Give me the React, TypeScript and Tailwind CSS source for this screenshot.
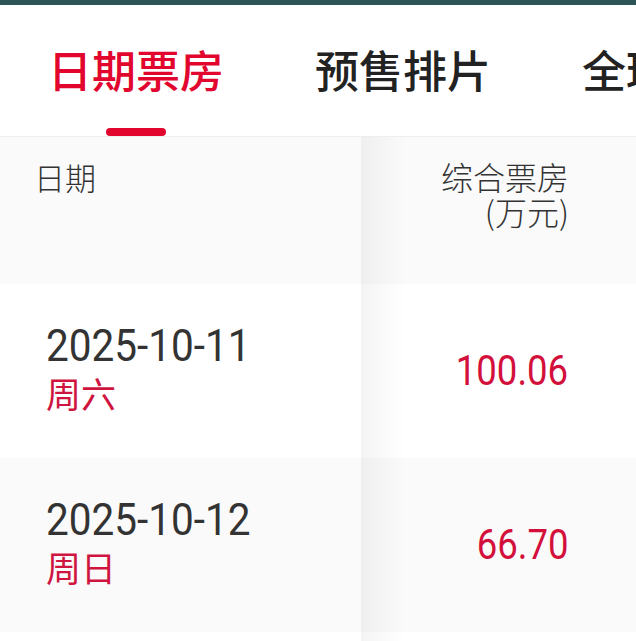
import React from 'react';

interface DayRow {
  date: string;
  week: string;
  total: string;
}

const tabs = ['日期票房', '预售排片', '全球票房', '地区票房'];

const rows: DayRow[] = [
  { date: '2025-10-11', week: '周六', total: '100.06' },
  { date: '2025-10-12', week: '周日', total: '66.70' },
  { date: '2025-10-13', week: '周一', total: '21.38' },
];

const cjk = "font-['Noto_Sans_CJK_SC',sans-serif]";
const num = "font-['Roboto','Noto_Sans_CJK_SC',sans-serif]";

const App: React.FC = () => {
  const active = 0;

  return (
    <div className={`w-[636px] h-[641px] overflow-hidden bg-white ${cjk}`}>
      <div className="h-[5px] bg-[#2d5558]" />

      {/* tabs */}
      <div className="flex gap-[91px] pl-[48px] pt-[42px] border-b border-[#eeeeee] whitespace-nowrap">
        {tabs.map((tab, i) => (
          <div key={tab} className="flex flex-col items-center shrink-0">
            <span
              className={`text-[44px] leading-[44px] font-medium ${
                i === active ? 'text-[#e2062f]' : 'text-[#222222]'
              }`}
            >
              {tab}
            </span>
            <span
              className={`mt-[37px] h-[8px] w-[60px] rounded-full ${
                i === active ? 'bg-[#e2062f]' : 'bg-transparent'
              }`}
            />
          </div>
        ))}
      </div>

      {/* table */}
      <div className="relative">
        <div className="flex h-[147px] bg-[#fafafa]">
          <div className="w-[361px] shrink-0 pl-[34px] pt-[22px] text-[31px] leading-[35px] font-light text-[#333333]">
            日期
          </div>
          <div className="w-[240px] shrink-0 pr-[32px] pt-[22px] text-right text-[32px] leading-[35px] font-light text-[#333333]">
            综合票房
            <br />
            (万元)
          </div>
        </div>

        {rows.map((row, i) => (
          <div key={row.date} className={`flex h-[174px] ${i % 2 === 0 ? 'bg-white' : 'bg-[#fafafa]'}`}>
            <div className="w-[361px] shrink-0 pl-[46px] pt-[38px]">
              <div className={`${num} text-[45px] leading-[48px] text-[#333333] origin-left scale-x-[0.9] whitespace-nowrap`}>
                {row.date}
              </div>
              <div className="mt-[3px] text-[35px] leading-[40px] text-[#cf1440]">{row.week}</div>
            </div>
            <div className="w-[240px] shrink-0 pr-[33px] flex items-center justify-end">
              <span className={`${num} text-[42px] leading-[48px] text-[#d3103b] origin-right scale-x-[0.87]`}>
                {row.total}
              </span>
            </div>
          </div>
        ))}

        {/* shadow cast by the fixed date column */}
        <div className="pointer-events-none absolute top-0 bottom-0 left-[361px] w-[44px] bg-gradient-to-r from-black/[0.045] to-transparent" />
      </div>
    </div>
  );
};

export default App;
